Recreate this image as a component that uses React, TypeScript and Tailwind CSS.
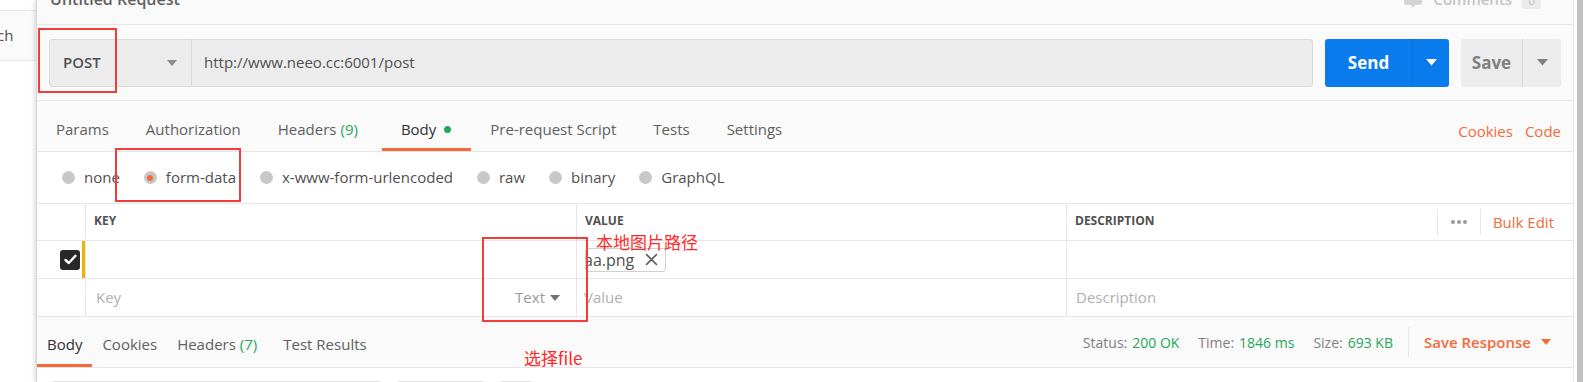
import React from "react";

const Caret = ({ className = "", size = 10 }: { className?: string; size?: number }) => (
  <svg width={size} height={size * 0.6} viewBox="0 0 10 6" className={className}>
    <path d="M0 0 L10 0 L5 6 Z" fill="currentColor" />
  </svg>
);

const Radio = ({ checked = false }: { checked?: boolean }) => (
  <span className="w-[13px] h-[13px] rounded-full bg-[#c8c8c8] flex items-center justify-center shrink-0">
    {checked && <span className="w-[6px] h-[6px] rounded-full bg-[#f26b3a]" />}
  </span>
);

export default function App() {
  const reqTabs = [
    { label: "Params" },
    { label: "Authorization" },
    { label: "Headers", count: "(9)" },
    { label: "Body", active: true, dot: true },
    { label: "Pre-request Script" },
    { label: "Tests" },
    { label: "Settings" },
  ];

  const bodyTypes = [
    { label: "none" },
    { label: "form-data", checked: true },
    { label: "x-www-form-urlencoded" },
    { label: "raw" },
    { label: "binary" },
    { label: "GraphQL" },
  ];

  const cell = "border-r border-[#e6e6e6] flex items-center";

  return (
    <div className="w-[1585px] h-[382px] overflow-hidden flex bg-white relative font-['Open_Sans',sans-serif] text-[#505050]">
      {/* Sidebar */}
      <aside className="w-[36px] shrink-0 flex flex-col">
        <div className="h-[11px] bg-white border-b border-[#e6e6e6]" />
        <div className="h-[50px] bg-[#fafafa] border-b border-[#e6e6e6] flex items-center overflow-hidden">
          <span className="text-[15px] text-[#505050] -ml-[3px]">ch</span>
        </div>
        <div className="flex-1 bg-white" />
      </aside>

      {/* Main */}
      <main className="flex-1 min-w-0 flex flex-col border-l border-[#d6d6d6] shadow-[-2px_0_4px_rgba(0,0,0,0.12)] z-10 bg-white">
        {/* Title */}
        <div className="h-[25px] shrink-0 bg-[#fafafa] border-b border-[#e6e6e6] flex items-start justify-between pl-[13px] pr-[32px] overflow-hidden">
          <span className="text-[16px] font-semibold text-[#606060] leading-none -mt-[9px]">Untitled Request</span>
          <div className="flex items-start gap-[10px] -mt-[8px] text-[#c4c4c4]">
            <svg width="20" height="17" viewBox="0 0 20 17">
              <path d="M1 2 Q1 0 3 0 H17 Q19 0 19 2 V11 Q19 13 17 13 H12 L10 16 L8 13 H3 Q1 13 1 11 Z" fill="#d4d4d4" />
            </svg>
            <span className="text-[15px] font-semibold leading-none">Comments</span>
            <span className="bg-[#ececec] px-[6px] text-[12px] leading-[17px] rounded-[2px]">0</span>
          </div>
        </div>

        {/* URL row */}
        <div className="h-[76px] shrink-0 border-b border-[#e6e6e6] bg-[#fafafa] flex items-center px-[12px] gap-[12px]">
          <div className="flex-1 flex h-[48px]">
            <div className="w-[143px] flex items-center justify-between pl-[13px] pr-[14px] bg-[#ececec] border border-[#d9d9d9] rounded-l-[3px]">
              <span className="text-[15px] font-semibold text-[#505050]">POST</span>
              <Caret className="text-[#8a8a8a]" size={10} />
            </div>
            <div className="flex-1 flex items-center pl-[12px] bg-[#ececec] border-y border-r border-[#d9d9d9] rounded-r-[3px]">
              <span className="text-[15px] text-[#505050]">http://www.neeo.cc:6001/post</span>
            </div>
          </div>
          <div className="w-[124px] h-[48px] flex rounded-[3px] bg-[#097bed]">
            <div className="w-[87px] flex items-center justify-center text-white text-[17px] font-bold">Send</div>
            <div className="flex-1 border-l border-[#0a6bd4] flex items-center justify-center text-white">
              <Caret size={11} />
            </div>
          </div>
          <div className="w-[100px] h-[48px] flex rounded-[3px] bg-[#ececec]">
            <div className="w-[61px] flex items-center justify-center text-[#808080] text-[17px] font-bold">Save</div>
            <div className="flex-1 border-l border-[#d8d8d8] flex items-center justify-center text-[#808080]">
              <Caret size={11} />
            </div>
          </div>
        </div>

        {/* Request tabs */}
        <div className="h-[51px] shrink-0 bg-[#fafafa] border-b border-[#e6e6e6] flex items-stretch pr-[12px]">
          {reqTabs.map((t) => (
            <div
              key={t.label}
              className={`flex items-center pl-[19px] pt-[10px] text-[15px] border-b-[3px] ${
                t.count ? "pr-[24px]" : t.dot ? "pr-[20px]" : "pr-[18px]"
              } ${t.active ? "border-[#f26b3a] text-[#303030]" : "border-transparent text-[#606060]"}`}
            >
              {t.label}
              {t.count && <span className="ml-[4px] text-[#26a65b]">{t.count}</span>}
              {t.dot && <span className="ml-[8px] w-[7px] h-[7px] rounded-full bg-[#26a65b]" />}
            </div>
          ))}
          <div className="ml-auto flex items-center gap-[12px] pt-[10px] text-[15px] text-[#f26b3a]">
            <span>Cookies</span>
            <span>Code</span>
          </div>
        </div>

        {/* Body types */}
        <div className="h-[51px] shrink-0 flex items-center pl-[25px] text-[15px] text-[#505050]">
          {bodyTypes.map((b) => (
            <div key={b.label} className="flex items-center gap-[9px] mr-[24px]">
              <Radio checked={b.checked} />
              <span>{b.label}</span>
            </div>
          ))}
        </div>

        {/* Params table */}
        <div className="border-t border-[#e6e6e6] shrink-0">
          <div className="grid grid-cols-[49px_491px_490px_1fr] h-[37px] border-b border-[#e6e6e6] text-[12px] font-bold text-[#505050]">
            <div className={cell} />
            <div className={`${cell} pl-[8px] pb-[2px]`}>KEY</div>
            <div className={`${cell} pl-[8px] pb-[2px]`}>VALUE</div>
            <div className="flex items-center pl-[8px] pr-[19px]">
              <span className="pb-[2px]">DESCRIPTION</span>
              <div className="ml-auto flex items-center h-[26px]">
                <div className="h-full border-l border-[#e6e6e6] px-[13px] flex items-center gap-[2px]">
                  <span className="w-[4px] h-[4px] rounded-full bg-[#9a9a9a]" />
                  <span className="w-[4px] h-[4px] rounded-full bg-[#9a9a9a]" />
                  <span className="w-[4px] h-[4px] rounded-full bg-[#9a9a9a]" />
                </div>
                <div className="h-full border-l border-[#e6e6e6] pl-[12px] flex items-center text-[15px] font-normal text-[#f26b3a]">
                  Bulk Edit
                </div>
              </div>
            </div>
          </div>

          <div className="grid grid-cols-[49px_491px_490px_1fr] h-[38px] border-b border-[#e6e6e6]">
            <div className={`${cell} justify-end relative`}>
              <span className="w-[20px] h-[20px] rounded-[3px] bg-[#282828] flex items-center justify-center mr-[2px]">
                <svg width="13" height="11" viewBox="0 0 13 11">
                  <path d="M1.5 6 L4.8 9 L11.5 1.8" stroke="white" strokeWidth="2.4" fill="none" strokeLinecap="round" strokeLinejoin="round" />
                </svg>
              </span>
              <span className="w-[3px] h-full bg-[#f0b400]" />
            </div>
            <div className={cell} />
            <div className={`${cell} pl-[8px]`}>
              <div className="h-[24px] flex items-center gap-[11px] border border-[#d0d0d0] rounded-[3px] pr-[7px] overflow-hidden">
                <span className="text-[16px] text-[#505050] -ml-[2px]">aa.png</span>
                <svg width="13" height="13" viewBox="0 0 12 12">
                  <path d="M1 1 L11 11 M11 1 L1 11" stroke="#606060" strokeWidth="1.5" />
                </svg>
              </div>
            </div>
            <div />
          </div>

          <div className="grid grid-cols-[49px_491px_490px_1fr] h-[38px] border-b border-[#e6e6e6] text-[15px] text-[#b0b0b0]">
            <div className={cell} />
            <div className={`${cell} pl-[10px] pr-[16px]`}>
              Key
              <span className="ml-auto flex items-center gap-[5px] text-[#9a9a9a]">
                Text
                <Caret size={10} className="text-[#707070]" />
              </span>
            </div>
            <div className={`${cell} pl-[8px]`}>
              <span className="-ml-[1px]">Value</span>
            </div>
            <div className="flex items-center pl-[9px]">Description</div>
          </div>
        </div>

        {/* Response bar */}
        <div className="h-[51px] shrink-0 bg-[#fafafa] border-b border-[#e6e6e6] flex items-stretch pr-[22px] text-[15px]">
          <div className="flex items-center px-[10px] pt-[7px] border-b-[3px] border-[#f26b3a] text-[#303030]">Body</div>
          <div className="flex items-center px-[10px] pt-[7px] border-b-[3px] border-transparent text-[#606060]">Cookies</div>
          <div className="flex items-center px-[10px] pt-[7px] border-b-[3px] border-transparent text-[#606060]">
            Headers<span className="ml-[4px] text-[#26a65b]">(7)</span>
          </div>
          <div className="flex items-center pl-[16px] pt-[7px] border-b-[3px] border-transparent text-[#606060]">Test Results</div>

          <div className="ml-auto flex items-center text-[14px] text-[#808080]">
            <span>Status:</span>
            <span className="ml-[5px] text-[#26a65b]">200 OK</span>
            <span className="ml-[19px]">Time:</span>
            <span className="ml-[5px] text-[#26a65b]">1846 ms</span>
            <span className="ml-[19px]">Size:</span>
            <span className="ml-[5px] text-[#26a65b]">693 KB</span>
            <div className="ml-[15px] h-[30px] border-l border-[#e6e6e6]" />
            <span className="ml-[15px] text-[15px] font-semibold text-[#f26b3a]">Save Response</span>
            <Caret size={10} className="ml-[10px] text-[#f26b3a]" />
          </div>
        </div>

        {/* Response body toolbar (cut off) */}
        <div className="flex-1 flex items-start gap-[14px] pl-[14px] pt-[13px]">
          <div className="w-[331px] h-[24px] rounded-[3px] bg-[#ececec] border border-[#e0e0e0]" />
          <div className="w-[89px] h-[24px] rounded-[3px] bg-[#ececec] border border-[#e0e0e0]" />
          <div className="w-[34px] h-[24px] rounded-[3px] bg-[#ececec] border border-[#e0e0e0]" />
        </div>
      </main>

      {/* Scrollbar */}
      <div className="w-[12px] shrink-0 border-l border-[#e8e8e8] bg-white flex justify-end pr-[2px]">
        <div className="w-[6px] h-full bg-[#c1c1c1]" />
      </div>

      {/* Annotations */}
      <div className="absolute left-[38px] top-[28px] w-[79px] h-[65px] border-2 border-[#f23b3b] z-20" />
      <div className="absolute left-[115px] top-[148px] w-[126px] h-[54px] border-2 border-[#f23b3b] z-20" />
      <div className="absolute left-[482px] top-[237px] w-[106px] h-[85px] border-2 border-[#f23b3b] z-20" />
      <span className="absolute left-[596px] top-[231px] z-20 text-[17px] leading-[22px] text-[#ff2a2a] font-['Noto_Sans_CJK_SC',sans-serif]">
        本地图片路径
      </span>
      <span className="absolute left-[524px] top-[347px] z-20 text-[17px] leading-[22px] text-[#ff2a2a] font-['Noto_Sans_CJK_SC',sans-serif]">
        选择file
      </span>
    </div>
  );
}
